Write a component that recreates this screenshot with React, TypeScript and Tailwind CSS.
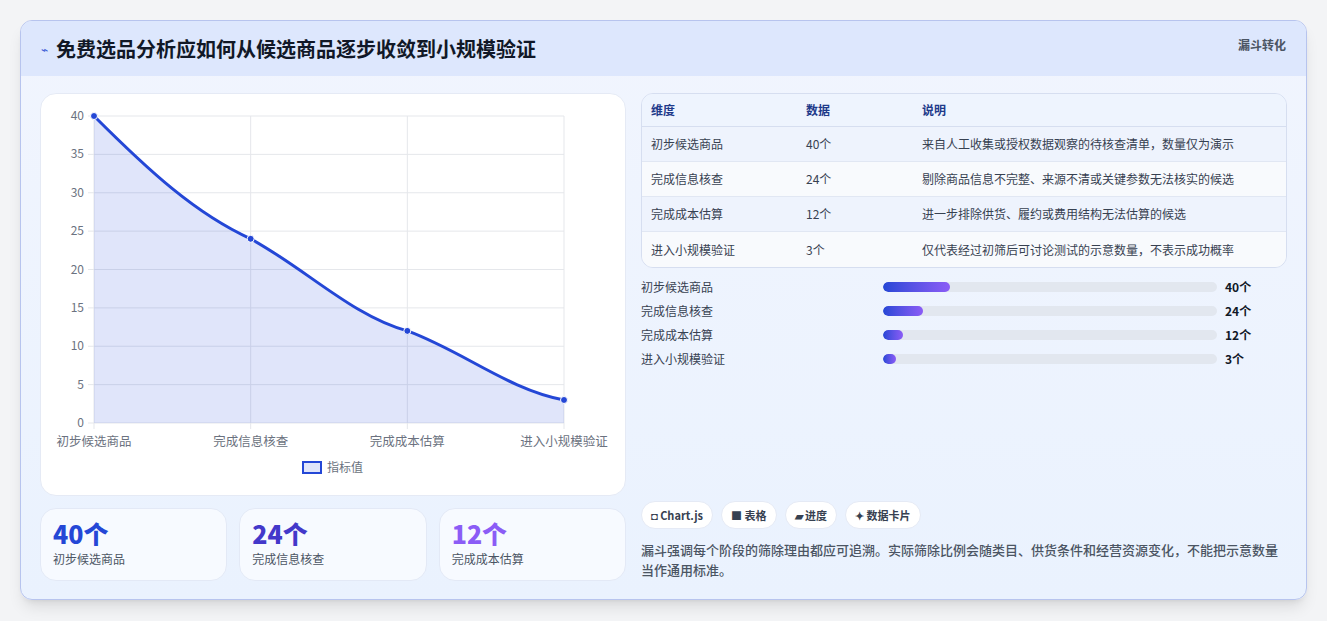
import React from "react";

const F = { fontFamily: '"Noto Sans CJK SC","Noto Sans",sans-serif' };
const rows = [
  ["初步候选商品", "40个", "来自人工收集或授权数据观察的待核查清单，数量仅为演示", 40],
  ["完成信息核查", "24个", "剔除商品信息不完整、来源不清或关键参数无法核实的候选", 24],
  ["完成成本估算", "12个", "进一步排除供货、履约或费用结构无法估算的候选", 12],
  ["进入小规模验证", "3个", "仅代表经过初筛后可讨论测试的示意数量，不表示成功概率", 3],
] as const;

function Chart() {
  const L = 53, T = 22, W = 470, H = 307;
  const xs = [0, 1, 2, 3].map((i) => L + (i * W) / 3);
  const vals = [40, 24, 12, 3];
  const y = (v: number) => T + H - (v / 40) * H;
  const p = vals.map((v, i) => [xs[i], y(v)]);
  const d = `M${p[0][0]},${p[0][1]} C${p[0][0] + 55},${p[0][1] + 55} ${p[1][0] - 55},${p[1][1] - 25} ${p[1][0]},${p[1][1]} C${p[1][0] + 55},${p[1][1] + 30} ${p[2][0] - 55},${p[2][1] - 15} ${p[2][0]},${p[2][1]} C${p[2][0] + 55},${p[2][1] + 20} ${p[3][0] - 55},${p[3][1] - 10} ${p[3][0]},${p[3][1]}`;
  return (
    <svg width="585" height="400" style={{ fontFamily: '"Noto Sans CJK SC",sans-serif' }}>
      {[0, 5, 10, 15, 20, 25, 30, 35, 40].map((v) => (
        <g key={v}>
          <line x1={L - 6} x2={L + W} y1={y(v)} y2={y(v)} stroke="#e5e7eb" />
          <text x={L - 10} y={y(v) + 4} fontSize="12" fill="#6b7280" textAnchor="end">{v}</text>
        </g>
      ))}
      {xs.map((x, i) => <line key={i} x1={x} x2={x} y1={T} y2={T + H + 6} stroke="#e5e7eb" />)}
      <path d={`${d} L${xs[3]},${T + H} L${xs[0]},${T + H} Z`} fill="rgba(37,70,220,0.14)" />
      <path d={d} fill="none" stroke="#2447d6" strokeWidth="3" />
      {p.map(([a, b], i) => <circle key={i} cx={a} cy={b} r="3.5" fill="#2447d6" stroke="#fff" strokeWidth="1" />)}
      {["初步候选商品", "完成信息核查", "完成成本估算", "进入小规模验证"].map((t, i) => (
        <text key={t} x={xs[i]} y={352} fontSize="12.5" fill="#6b7280" textAnchor="middle">{t}</text>
      ))}
      <rect x="262" y="368" width="18" height="11" fill="rgba(37,70,220,0.14)" stroke="#2447d6" strokeWidth="2" />
      <text x="286" y="378" fontSize="12" fill="#6b7280">指标值</text>
    </svg>
  );
}

export default function App() {
  return (
    <div className="w-[1327px] h-[621px] bg-[#f3f4f6] pt-5 px-5" style={F}>
      <div className="w-[1287px] h-[580px] rounded-xl border border-[#b7c4ee] overflow-hidden bg-gradient-to-b from-[#f1f5fe] to-[#eaf2fe] shadow-lg">
        <div className="h-[55px] bg-[#dde7fd] flex items-center justify-between px-5">
          <div className="flex items-center gap-2">
            <span className="text-[#3b5bd6] text-xs">⌁</span>
            <span className="text-[20px] font-bold text-[#111827]">免费选品分析应如何从候选商品逐步收敛到小规模验证</span>
          </div>
          <span className="text-xs font-bold text-[#4b5563] self-start mt-4">漏斗转化</span>
        </div>
        <div className="flex gap-[15px] px-[19px] pt-[17px]">
          <div className="w-[586px] flex flex-col gap-3">
            <div className="h-[403px] bg-white rounded-2xl border border-[#e5eaf5]"><Chart /></div>
            <div className="flex gap-3">
              {[["40个", "text-[#2447d6]"], ["24个", "text-[#4338ca]"], ["12个", "text-[#8b5cf6]"]].map(([v, c], i) => (
                <div key={v} className="flex-1 h-[73px] rounded-2xl bg-[#f7faff] border border-[#e3e9f6] px-3 pt-2">
                  <div className={`text-[25px] font-extrabold leading-8 ${c}`}>{v}</div>
                  <div className="text-xs text-[#4b5563] mt-0.5">{rows[i][0]}</div>
                </div>
              ))}
            </div>
          </div>
          <div className="w-[647px] flex flex-col">
            <div className="rounded-xl border border-[#d6def0] overflow-hidden text-xs">
              <div className="flex h-[33px] items-center bg-[#eef4fe] border-b border-[#d6def0] text-[#1e3a8a] font-bold">
                <div className="w-[155px] pl-[9px]">维度</div><div className="w-[116px] pl-[9px]">数据</div><div className="pl-[9px]">说明</div>
              </div>
              {rows.map((r, i) => (
                <div key={r[0]} className={`flex h-[35px] items-center text-[#374151] ${i % 2 ? "bg-[#f8fafd]" : "bg-[#eef3fd]"} ${i < 3 ? "border-b border-[#e1e7f3]" : ""}`}>
                  <div className="w-[155px] pl-[9px]">{r[0]}</div><div className="w-[116px] pl-[9px]">{r[1]}</div><div className="pl-[9px]">{r[2]}</div>
                </div>
              ))}
            </div>
            <div className="flex flex-col gap-[11px] mt-[12px]">
              {rows.map((r) => (
                <div key={r[0]} className="flex items-center h-[13px] text-xs">
                  <div className="w-[242px] text-[#374151]">{r[0]}</div>
                  <div className="w-[334px] h-[10px] rounded-full bg-[#e2e7ef] overflow-hidden">
                    <div className="h-full rounded-full bg-gradient-to-r from-[#2447d6] to-[#8b5cf6]" style={{ width: Math.max(13, (r[3] / 200) * 334) + "px" }} />
                  </div>
                  <div className="ml-2 font-bold text-[#111827]">{r[1]}</div>
                </div>
              ))}
            </div>
            <div className="flex gap-2 mt-[136px]">
              {["◘ Chart.js", "■ 表格", "▰ 进度", "✦ 数据卡片"].map((t) => (
                <span key={t} className="h-[28px] px-[9px] flex items-center rounded-full bg-white border border-[#e5eaf5] text-[11px] font-bold text-[#374151]">{t}</span>
              ))}
            </div>
            <p className="mt-[11px] text-[13px] leading-5 text-[#4b5563] font-medium">漏斗强调每个阶段的筛除理由都应可追溯。实际筛除比例会随类目、供货条件和经营资源变化，不能把示意数量当作通用标准。</p>
          </div>
        </div>
      </div>
    </div>
  );
}
